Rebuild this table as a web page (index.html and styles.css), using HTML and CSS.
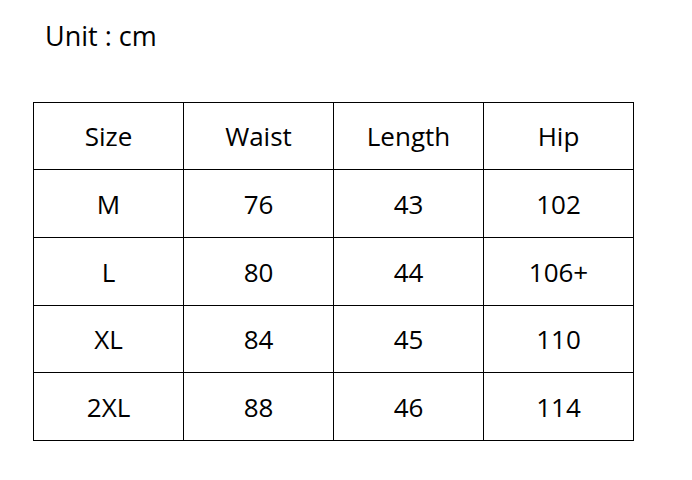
FILE: index.html
```html
<!DOCTYPE html>
<html>
<head>
<meta charset="utf-8">
<link rel="stylesheet" href="styles.css">
</head>
<body>
<div class="page">
  <div class="unit">Unit : cm</div>
  <table class="sizes">
    <tr class="r1"><td>Size</td><td>Waist</td><td>Length</td><td>Hip</td></tr>
    <tr class="r2"><td>M</td><td>76</td><td>43</td><td>102</td></tr>
    <tr class="r3"><td>L</td><td>80</td><td>44</td><td>106+</td></tr>
    <tr class="r4"><td>XL</td><td>84</td><td>45</td><td>110</td></tr>
    <tr class="r5"><td>2XL</td><td>88</td><td>46</td><td>114</td></tr>
  </table>
</div>
</body>
</html>
```

FILE: styles.css
```css
html, body {
  margin: 0;
  padding: 0;
  background: #ffffff;
}
.page {
  width: 692px;
  height: 480px;
  font-family: "Open Sans", "Lato", sans-serif;
  color: #000;
}
.unit {
  padding: 18px 0 0 45px;
  font-size: 27px;
  line-height: 36px;
}
.sizes {
  margin-left: 33px;
  margin-top: 48px;
  border-collapse: collapse;
  table-layout: fixed;
  width: 601px;
}
.sizes td {
  border: 1px solid #000;
  width: 149px;
  text-align: center;
  vertical-align: middle;
  font-size: 26px;
  padding: 0;
  line-height: 30px;
}
.r1 td { height: 66px; }
.r2 td { height: 67px; }
.r3 td { height: 67px; }
.r4 td { height: 66px; }
.r5 td { height: 67px; }
```
